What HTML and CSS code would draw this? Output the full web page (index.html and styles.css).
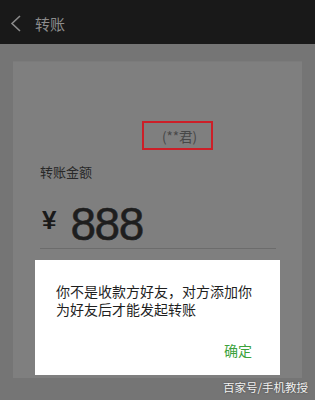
FILE: index.html
```html
<!DOCTYPE html>
<html lang="zh">
<head>
<meta charset="utf-8">
<link rel="stylesheet" href="styles.css">
</head>
<body>
<div class="screen">
  <header class="topbar">
    <svg class="back" width="14" height="20" viewBox="0 0 14 20"><polyline points="10,2 2,9.5 10,17" fill="none" stroke="#8a8a8a" stroke-width="1.6"/></svg>
    <span class="title">转账</span>
  </header>
  <main class="main">
    <section class="card">
      <div class="namebox">(**君)</div>
      <div class="label">转账金额</div>
      <div class="amount">
        <span class="yen">¥</span>
        <span class="num">888</span>
      </div>
      <div class="divider"></div>
    </section>
  </main>
  <div class="dialog">
    <p class="msg">你不是收款方好友，对方添加你为好友后才能发起转账</p>
    <div class="actions"><span class="ok">确定</span></div>
  </div>
  <div class="watermark">百家号/手机教授</div>
</div>
</body>
</html>
```
FILE: styles.css
```css
* { box-sizing: border-box; }
html, body { margin: 0; padding: 0; }
body {
  font-family: "Noto Sans CJK SC", "Liberation Sans", sans-serif;
  background: #757575;
}
.screen {
  position: relative;
  width: 315px;
  height: 400px;
  overflow: hidden;
  background: #757575;
}
.topbar {
  height: 44px;
  background: #191919;
  display: flex;
  align-items: center;
  padding-left: 10px;
}
.back { display: block; margin-top: 4px; }
.title {
  margin-left: 11px;
  font-size: 15px;
  line-height: 20px;
  color: #8c8c8c;
  margin-top: 3px;
}
.main {
  padding: 17px 13px 0 13px;
}
.card {
  background: #7f7f7f;
  height: 317px;
  padding: 0 26px 0 27px;
  border-top: 1px solid #7b7b7b;
}
.namebox {
  margin-top: 59px;
  margin-left: 102px;
  width: 71px;
  height: 29px;
  border: 2px solid #cc1f28;
  display: flex;
  align-items: center;
  justify-content: center;
  padding-left: 4px;
  font-size: 13.5px;
  color: #474747;
}
.label {
  margin-top: 13px;
  font-size: 13px;
  line-height: 18px;
  color: #282828;
}
.amount {
  margin-top: 18px;
  height: 48px;
  display: flex;
  align-items: center;
  gap: 14px;
}
.yen {
  font-family: "Liberation Sans", sans-serif;
  font-weight: bold;
  font-size: 26px;
  color: #1a1a1a;
  margin-top: -6px;
  margin-left: 2px;
}
.num {
  font-family: "Liberation Sans", sans-serif;
  font-size: 46px;
  line-height: 48px;
  letter-spacing: -1.5px;
  color: #1e1e1e;
  -webkit-text-stroke: 0.5px #1e1e1e;
  margin-top: 2px;
}
.divider {
  margin-top: 1px;
  height: 1px;
  background: #6c6c6c;
}
.dialog {
  position: absolute;
  left: 35px;
  top: 260px;
  width: 245px;
  height: 115px;
  background: #fff;
  padding: 22px 21px 0 21px;
}
.msg {
  margin: 0;
  font-size: 14px;
  line-height: 18px;
  color: #1f1f1f;
}
.actions {
  margin-top: 23px;
  display: flex;
  justify-content: flex-end;
  padding-right: 7px;
}
.ok {
  font-size: 14px;
  line-height: 18px;
  color: #3ca23c;
}
.watermark {
  position: absolute;
  right: 7px;
  top: 379px;
  font-size: 11.5px;
  line-height: 16px;
  color: #f2f2f2;
  text-shadow: 0 0 2px rgba(0,0,0,0.5);
}
```
